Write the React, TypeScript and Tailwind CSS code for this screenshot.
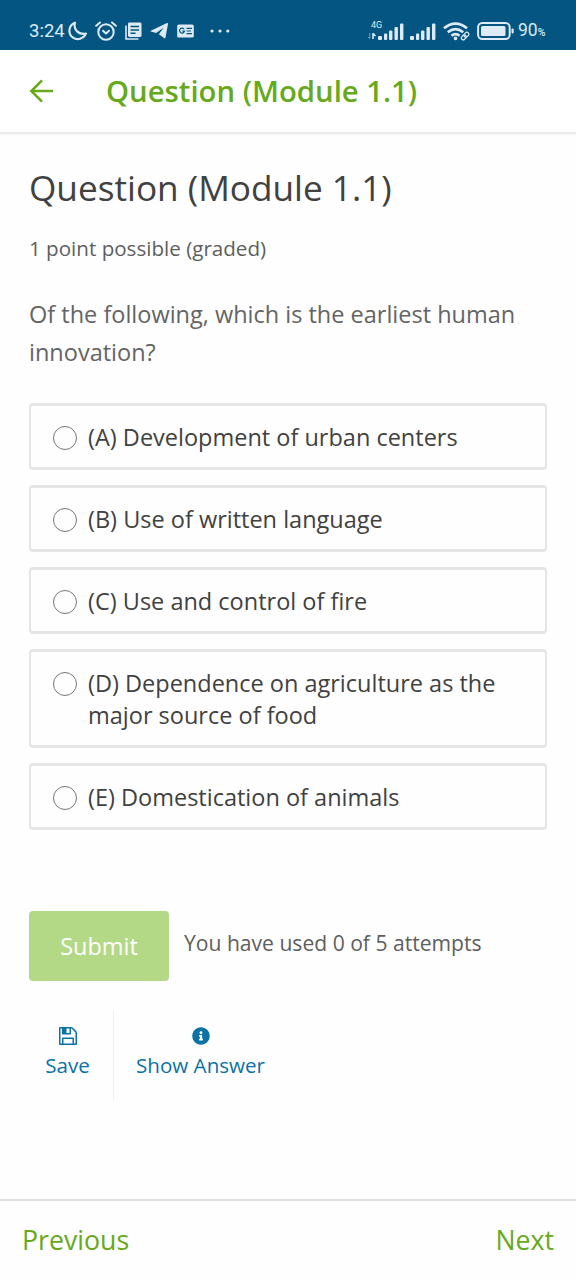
import { FaInfoCircle } from "react-icons/fa";

interface Choice {
  id: string;
  text: string;
}

const choices: Choice[] = [
  { id: "A", text: "(A) Development of urban centers" },
  { id: "B", text: "(B) Use of written language" },
  { id: "C", text: "(C) Use and control of fire" },
  { id: "D", text: "(D) Dependence on agriculture as the major source of food" },
  { id: "E", text: "(E) Domestication of animals" },
];

function SignalBars() {
  return (
    <svg width="26" height="17" viewBox="0 0 26 17" fill="currentColor">
      <rect x="0" y="13" width="4" height="4" rx="1" />
      <rect x="6" y="10.5" width="3.2" height="6.5" rx="1" />
      <rect x="11" y="7.5" width="3.4" height="9.5" rx="1" />
      <rect x="16.5" y="4" width="3.4" height="13" rx="1" />
      <rect x="22" y="0.5" width="3.4" height="16.5" rx="1" />
    </svg>
  );
}

function StatusBar() {
  return (
    <div className="flex h-[50px] items-center bg-[#045582] pt-3 pl-[29px] pr-[29px] font-['Roboto',sans-serif] text-[#dcebf5]">
      <span className="w-[37px] whitespace-nowrap text-[18.5px] leading-5">3:24</span>
      <svg className="ml-[2px]" width="20" height="20" viewBox="0 0 20 20" fill="none" stroke="currentColor" strokeWidth="2.1" strokeLinejoin="round">
        <path d="M7 1.7C5.2 7.8 9.8 14.2 18 12.6C15.4 18 9.4 19.6 5 16.6C-.4 12.8 .4 4.2 7 1.7Z" />
      </svg>
      <svg className="ml-[7px]" width="22" height="20" viewBox="0 0 22 20" fill="none" stroke="currentColor" strokeWidth="2" strokeLinecap="round" strokeLinejoin="round">
        <circle cx="11" cy="11" r="7.7" />
        <path d="M1.2 4.8L5 1.5M17 1.5L20.8 4.8" />
        <path d="M8 9.8L11 12.4L14 9.8" />
      </svg>
      <svg className="ml-2" width="17" height="18" viewBox="0 0 17 18">
        <path d="M1 3.5V17H13.5" fill="none" stroke="currentColor" strokeWidth="1.6" />
        <rect x="3" y="0.5" width="13.5" height="14.5" rx="1.4" fill="currentColor" />
        <path d="M5.5 4.5H14M5.5 8H14M5.5 11.2H10.5" stroke="#045582" strokeWidth="1.5" />
      </svg>
      <svg className="ml-[8px]" width="19" height="18" viewBox="0 0 19 18" fill="currentColor">
        <path d="M.8 8.8L17 1.1Q18.2.7 18 2L15.5 15.6Q15.2 17 14 16.1L8.9 12.3L13.6 5.8L6.1 11L.9 9.5Q.3 9.2.8 8.8Z" />
      </svg>
      <svg className="ml-2" width="17" height="14" viewBox="0 0 17 14" fill="none">
        <rect x="0.2" y="0.4" width="16.6" height="13.2" rx="1.6" fill="currentColor" />
        <path d="M7.2 5.2A2.5 2.5 0 1 0 7.5 7.2H5.4M9.5 4.3H15M9.5 7H14M9.5 9.7H15" stroke="#045582" strokeWidth="1.2" />
      </svg>
      <svg className="ml-4" width="20" height="4" viewBox="0 0 20 4" fill="currentColor">
        <circle cx="2" cy="2" r="1.6" />
        <circle cx="10" cy="2" r="1.6" />
        <circle cx="17.8" cy="2" r="1.6" />
      </svg>

      <div className="ml-auto flex items-center">
        <div className="relative flex w-9 justify-end">
          <span className="absolute left-[3px] top-[-2px] text-[9px] leading-[8px]">4G</span>
          <svg className="absolute bottom-[1px] left-0" width="8" height="6" viewBox="0 0 8 6" stroke="currentColor" fill="none">
            <path d="M1.8 0V5.5M0 4L1.8 5.5" opacity=".5" />
            <path d="M5 6V.6L7.5 2.8" strokeWidth="1.6" />
          </svg>
          <SignalBars />
        </div>
        <div className="ml-[6px]">
          <SignalBars />
        </div>
        <svg className="ml-[7px]" width="27" height="19" viewBox="0 0 27 19" fill="none" stroke="currentColor" strokeWidth="2.6">
          <path d="M1 6.3Q12.5 -3.2 24 6.3" />
          <path d="M4.8 10.3Q12.5 4 20.2 10.3" />
          <path d="M8.4 13.8Q12.5 10.4 16.6 13.8" />
          <circle cx="12.5" cy="16.4" r="1.8" fill="currentColor" stroke="none" />
          <g stroke="#045582" strokeWidth="4">
            <path d="M20 16L24 12" />
          </g>
          <g strokeWidth="1.2" transform="rotate(-45 22 14)">
            <rect x="17.5" y="12.2" width="5.3" height="3.8" rx="1.9" />
            <rect x="21.2" y="12.2" width="5.3" height="3.8" rx="1.9" />
          </g>
        </svg>
        <svg className="ml-[7px]" width="37" height="18" viewBox="0 0 37 18" fill="none">
          <rect x="1.1" y="1.1" width="31.6" height="15.8" rx="4.2" stroke="currentColor" strokeWidth="2" />
          <rect x="4" y="4" width="24.5" height="10" rx="1.5" fill="currentColor" />
          <rect x="34.5" y="6.5" width="2.2" height="5" rx="1" fill="currentColor" />
        </svg>
        <span className="ml-1 w-[29px] pt-px whitespace-nowrap text-[17.5px] leading-5">
          90<span className="text-[10.5px] font-medium">%</span>
        </span>
      </div>
    </div>
  );
}

function SaveIcon() {
  return (
    <svg width="18" height="18" viewBox="0 128 1536 1536" fill="currentColor">
      <path d="M384 1536h768v-384h-768v384zm896 0h128v-896q0-14-10-38.5t-20-34.5l-281-281q-10-10-34-20t-39-10v416q0 40-28 68t-68 28h-576q-40 0-68-28t-28-68v-416h-128v1280h128v-416q0-40 28-68t68-28h832q40 0 68 28t28 68v416zm-384-928v-320q0-13-9.5-22.5t-22.5-9.5h-192q-13 0-22.5 9.5t-9.5 22.5v320q0 13 9.5 22.5t22.5 9.5h192q13 0 22.5-9.5t9.5-22.5zm640 32v928q0 40-28 68t-68 28h-1344q-40 0-68-28t-28-68v-1344q0-40 28-68t68-28h928q40 0 88 20t76 48l280 280q28 28 48 76t20 88z" />
    </svg>
  );
}

export default function App() {
  return (
    <div className="flex h-[1280px] w-full flex-col overflow-hidden bg-[#fefefe] font-['Open_Sans',sans-serif]">
      <StatusBar />

      <header className="flex h-[84px] items-center border-b-2 border-[#ebebeb] bg-white pl-[29px] text-[#66aa1c] shadow-[0_1px_2px_rgba(0,0,0,0.04)]">
        <svg width="25" height="24" viewBox="0 0 25 24" fill="none" stroke="currentColor" strokeWidth="2.5">
          <path d="M24 12H2.5M13 1.3L2.3 12L13 22.7" />
        </svg>
        <h1 className="ml-[52px] pt-[2px] text-[29.3px] font-semibold whitespace-nowrap">Question (Module 1.1)</h1>
      </header>

      <main className="flex-1 px-[29px] pt-[29px]">
        <h2 className="text-[35.2px] leading-[48px] text-[#414141] whitespace-nowrap">Question (Module 1.1)</h2>
        <p className="mt-[21px] text-[20.6px] leading-8 text-[#5e5e5e]">1 point possible (graded)</p>
        <p className="mt-8 text-[23.5px] leading-[37.5px] text-[#646464]">
          Of the following, which is the earliest human innovation?
        </p>

        <div className="mt-8 space-y-[15px]">
          {choices.map((choice) => (
            <label
              key={choice.id}
              className="flex rounded-[4px] border-x-2 border-y-[3px] border-[#e5e5e5] pt-[15px] pb-[14px] pl-[22px] pr-5 text-[23.5px] leading-8 text-[#414141]"
            >
              <input
                type="radio"
                name="answer"
                className="mt-[5px] mr-[11px] size-6 shrink-0 appearance-none rounded-full border-[1.5px] border-[#767676]"
              />
              <span>{choice.text}</span>
            </label>
          ))}
        </div>

        <div className="mt-[81px] flex">
          <button className="h-[70px] w-[140px] rounded-[4px] bg-[#b3d987] pt-[2px] text-[23.5px] text-white">Submit</button>
          <p className="ml-[15px] pt-4 text-[21.1px] leading-8 text-[#5e5e5e]">You have used 0 of 5 attempts</p>
        </div>

        <div className="mt-[29px] flex text-[20.6px] leading-8 text-[#0b72a5]">
          <button className="flex h-[90px] w-[85px] flex-col items-center border-r border-[#f0f0f0] pt-[17px] pr-[7px]">
            <SaveIcon />
            <span className="mt-1">Save</span>
          </button>
          <button className="ml-[22px] flex h-[90px] flex-col items-center pt-[17px] whitespace-nowrap">
            <FaInfoCircle size={18} />
            <span className="mt-1">Show Answer</span>
          </button>
        </div>
      </main>

      <footer className="flex h-[81px] items-center justify-between border-t-2 border-[#e0e0e0] px-[22px] text-[26.7px] text-[#66aa1c]">
        <button>Previous</button>
        <button>Next</button>
      </footer>
    </div>
  );
}
